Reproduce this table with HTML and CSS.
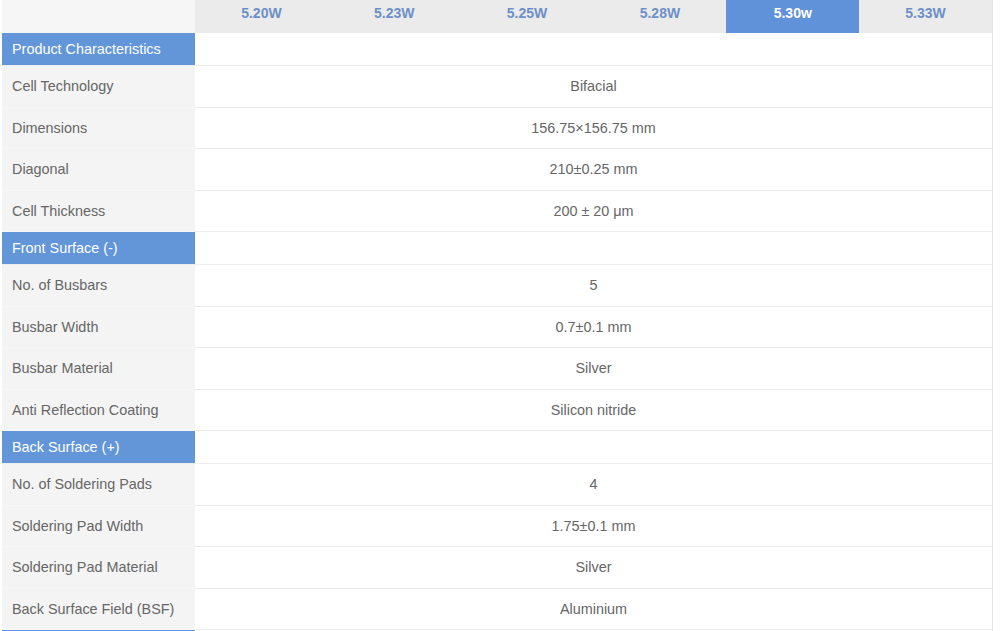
FILE: index.html
```html
<!DOCTYPE html>
<html>
<head>
<meta charset="utf-8">
<link rel="stylesheet" href="styles.css">
</head>
<body>
<div class="table">
  <div class="row head">
    <div class="lab"></div>
    <div class="pw">5.20W</div>
    <div class="pw">5.23W</div>
    <div class="pw">5.25W</div>
    <div class="pw">5.28W</div>
    <div class="pw active">5.30w</div>
    <div class="pw">5.33W</div>
  </div>
  <div class="row sec"><div class="lab">Product Characteristics</div><div class="val"></div></div>
  <div class="row"><div class="lab">Cell Technology</div><div class="val">Bifacial</div></div>
  <div class="row"><div class="lab">Dimensions</div><div class="val">156.75×156.75 mm</div></div>
  <div class="row"><div class="lab">Diagonal</div><div class="val">210±0.25 mm</div></div>
  <div class="row"><div class="lab">Cell Thickness</div><div class="val">200 ± 20 μm</div></div>
  <div class="row sec"><div class="lab">Front Surface (-)</div><div class="val"></div></div>
  <div class="row"><div class="lab">No. of Busbars</div><div class="val">5</div></div>
  <div class="row"><div class="lab">Busbar Width</div><div class="val">0.7±0.1 mm</div></div>
  <div class="row"><div class="lab">Busbar Material</div><div class="val">Silver</div></div>
  <div class="row"><div class="lab">Anti Reflection Coating</div><div class="val">Silicon nitride</div></div>
  <div class="row sec"><div class="lab">Back Surface (+)</div><div class="val"></div></div>
  <div class="row"><div class="lab">No. of Soldering Pads</div><div class="val">4</div></div>
  <div class="row"><div class="lab">Soldering Pad Width</div><div class="val">1.75±0.1 mm</div></div>
  <div class="row"><div class="lab">Soldering Pad Material</div><div class="val">Silver</div></div>
  <div class="row"><div class="lab">Back Surface Field (BSF)</div><div class="val">Aluminium</div></div>
  <div class="row sec"><div class="lab"></div><div class="val"></div></div>
</div>
</body>
</html>
```

FILE: styles.css
```css
html, body {
  margin: 0;
  padding: 0;
  background: #ffffff;
  overflow: hidden;
  height: 631px;
}
body {
  font-family: "Liberation Sans", Arial, sans-serif;
  font-size: 14.4px;
  color: #666666;
}
.table {
  margin-left: 2px;
  width: 990px;
  border-right: 1px solid #e6e6e6;
}
.row {
  display: grid;
  grid-template-columns: 193px 1fr;
  height: 41.5px;
  box-sizing: border-box;
  border-bottom: 1px solid #ececec;
}
.row .lab {
  background: #f4f4f4;
  padding-left: 10px;
  display: flex;
  align-items: center;
  border-bottom: 1px solid #f7f7f7;
  margin-bottom: -1px;
}
.row .val {
  display: flex;
  align-items: center;
  justify-content: center;
  background: #ffffff;
}
.row.head {
  grid-template-columns: 193px repeat(6, 1fr);
  height: 33px;
  border-bottom: none;
}
.row.head .lab {
  background: #f6f6f6;
  border-bottom: none;
  margin-bottom: 0;
}
.pw {
  background: #ebebeb;
  color: #6c90c9;
  font-weight: bold;
  font-size: 14px;
  display: flex;
  align-items: center;
  justify-content: center;
  padding-bottom: 7px;
  box-sizing: border-box;
}
.pw.active {
  background: #5f92d8;
  color: #ffffff;
}
.row.sec {
  height: 33px;
}
.row.sec .lab {
  background: #6296d8;
  color: #ffffff;
  border-bottom: none;
  margin-bottom: 0;
}
```
